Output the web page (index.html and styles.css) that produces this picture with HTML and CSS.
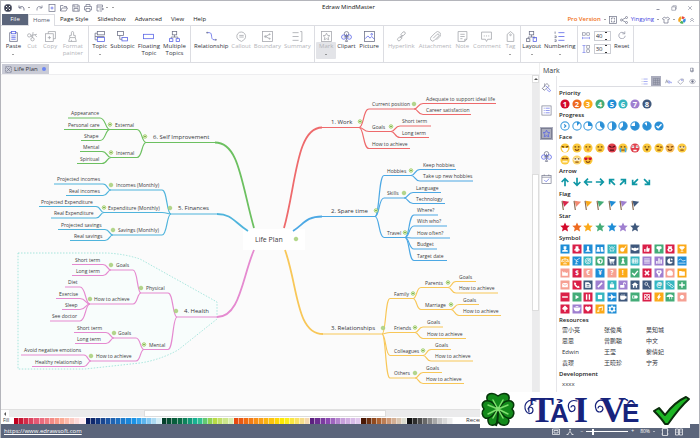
FILE: index.html
```html
<!DOCTYPE html>
<html lang="en">
<head>
<meta charset="utf-8">
<title>Edraw MindMaster</title>
<link rel="stylesheet" href="styles.css">
</head>
<body>
<svg class="defs" aria-hidden="true">
  <symbol id="logo" viewBox="0 0 16 16"><circle cx="8" cy="8" r="7.5" fill="#3b3f4d"/><path d="M4 4l8 8M12 4l-8 8" stroke="#fff" stroke-width="2"/><circle cx="8" cy="8" r="2" fill="#3b3f4d"/></symbol>
  <symbol id="undo" viewBox="0 0 16 16"><path d="M2 3v5h5M2.500 8C6 3 13 4 12 13" stroke-width="1.800"/></symbol>
  <symbol id="redo" viewBox="0 0 16 16"><path d="M14 3v5H9M13.500 8C10 3 3 4 4 13"/></symbol>
  <symbol id="new" viewBox="0 0 16 16"><rect x="2" y="1" width="12" height="14"/><path class="b" d="M8 5v6M5 8h6"/></symbol>
  <symbol id="open" viewBox="0 0 16 16"><path d="M1 14V3h5l2 2h5v3M1 14L4 8h11l-3 6z"/></symbol>
  <symbol id="save" viewBox="0 0 16 16"><path d="M1.500 1.500h11l2 2v11h-13zM4 2v4h8V2M4 14V9h8v5"/></symbol>
  <symbol id="print" viewBox="0 0 16 16"><path d="M4 5V1h8v4M4 12H1V5h14v7h-3M4 9h8v6H4z"/></symbol>
  <symbol id="export" viewBox="0 0 16 16"><path d="M13 6V2H2v12h4M2 6h11M7 10h8M12 8l3 2-3 2M7 14h5"/></symbol>
  <symbol id="paste" viewBox="0 0 20 20"><path d="M6 3H3v16h14V3h-3"/><rect class="b" x="6" y="1" width="8" height="4"/><path class="b" d="M6 9h8M6 12h8M6 15h8"/></symbol>
  <symbol id="cut" viewBox="0 0 20 20"><circle cx="4" cy="8" r="3"/><circle cx="10" cy="15" r="3"/><path d="M7 8l11-2M10 12L11 2M7 9l3 3M14 7l4 4"/></symbol>
  <symbol id="copy" viewBox="0 0 20 20"><path d="M6 5V1h13v13h-4"/><rect x="1" y="5" width="14" height="14"/><path d="M8 9v6M5 12h6"/></symbol>
  <symbol id="painter" viewBox="0 0 20 20"><path d="M8 8V3a2 2 0 0 1 4 0v5h3v4H5V8zM5 12l-2 7h14l-2-7M8 19v-3"/></symbol>
  <symbol id="topic" viewBox="0 0 20 20"><rect x="6" y="1" width="13" height="6"/><path d="M6 4H2v12h4"/><rect class="b" x="6" y="12" width="13" height="7"/><path d="M2 10h17"/></symbol>
  <symbol id="subtopic" viewBox="0 0 20 20"><rect x="1" y="1" width="11" height="7"/><path d="M5 8v7h4"/><rect class="b" x="9" y="12" width="10" height="6"/></symbol>
  <symbol id="floating" viewBox="0 0 20 20"><rect class="b" x="1" y="6" width="18" height="8"/></symbol>
  <symbol id="multiple" viewBox="0 0 20 20"><rect x="6" y="1" width="8" height="6"/><path d="M10 7v4M4 14v-3h12v3"/><rect class="b" x="1" y="14" width="6" height="5"/><rect class="b" x="13" y="14" width="6" height="5"/></symbol>
  <symbol id="relation" viewBox="0 0 20 20"><path class="b" d="M2 3h4c7 0 1 13 9 13h3"/><circle cx="2" cy="3" r="1"/><circle cx="18" cy="16" r="1"/></symbol>
  <symbol id="callout" viewBox="0 0 20 20"><path d="M6 17a8 8 0 1 1 7 0l-3 2zM6 8h8M6 11h8"/></symbol>
  <symbol id="boundary" viewBox="0 0 20 20"><rect x="1" y="1" width="18" height="18"/><path d="M14 6L6 10l8 4"/><circle cx="6" cy="10" r="1.500"/><circle cx="14" cy="6" r="1"/><circle cx="14" cy="14" r="1"/></symbol>
  <symbol id="summary" viewBox="0 0 20 20"><path d="M1 3h11M1 10h11M1 17h11M15 1h3v18h-3"/></symbol>
  <symbol id="mark" viewBox="0 0 20 20"><rect x="1" y="1" width="18" height="18"/><path class="b" d="M10 4l2 4 4 .5-3 3 1 4.500-4-2-4 2 1-4.500-3-3 4-.5z"/></symbol>
  <symbol id="clipart" viewBox="0 0 20 20"><circle cx="10" cy="5" r="4"/><circle class="b" cx="5" cy="11" r="4"/><circle class="b" cx="15" cy="11" r="4"/><path d="M10 5v10l-2 4h4l-2-4M5 11l5-1 5 1"/></symbol>
  <symbol id="picture" viewBox="0 0 20 20"><rect x="1" y="1" width="18" height="18"/><path class="b" d="M2 14l5-5 4 4 3-3 5 5"/><circle class="b" cx="14" cy="6" r="1.500"/></symbol>
  <symbol id="link" viewBox="0 0 20 20"><rect x="9" y="3" width="9" height="5" rx="2.500" transform="rotate(-45 13 6)"/><rect x="2" y="12" width="9" height="5" rx="2.500" transform="rotate(-45 6 14)"/><path d="M7 13l6-6"/></symbol>
  <symbol id="attach" viewBox="0 0 20 20"><path d="M6 13l7-7a2 2 0 0 1 3 3l-8 8a4 4 0 0 1-6-6l8-8a5 5 0 0 1 8 7l-6 6"/></symbol>
  <symbol id="note" viewBox="0 0 20 20"><path d="M2 1h16v14l-4 4H2zM6 6h8M6 10h8M6 14h4M14 19v-4h4"/></symbol>
  <symbol id="comment" viewBox="0 0 20 20"><path d="M1 2h18v13h-7l-2 4-2-4H1zM5 9h2M9 9h2M13 9h2"/></symbol>
  <symbol id="tag" viewBox="0 0 20 20"><path d="M4 6l6-5 6 5v13H4z"/><circle cx="10" cy="7" r="1.500"/></symbol>
  <symbol id="layout" viewBox="0 0 20 20"><rect x="6" y="1" width="8" height="6"/><path d="M10 7v4M4 14v-3h12v3"/><rect x="1" y="14" width="6" height="5"/><rect class="b" x="13" y="12" width="6" height="7"/></symbol>
  <symbol id="numbering" viewBox="0 0 20 20"><path d="M2 1v4M1 9h3v3H1M1 16h3v3H1"/><path class="b" d="M8 3h11M8 10h11M8 17h11"/></symbol>
  <symbol id="hgap" viewBox="0 0 20 20"><rect x="1" y="2" width="7" height="6"/><rect x="12" y="2" width="7" height="6"/><path class="b" d="M1 12v6M19 12v6M1 15h18"/></symbol>
  <symbol id="vgap" viewBox="0 0 20 20"><rect x="12" y="1" width="7" height="7"/><rect x="12" y="12" width="7" height="7"/><path class="b" d="M1 1h8M1 19h8M5 1v18"/></symbol>
  <symbol id="reset" viewBox="0 0 20 20"><path d="M16 6a8 8 0 1 0 2 6M17 1v6h-6"/></symbol>
  <symbol id="frame" viewBox="0 0 16 16"><rect x="1" y="1" width="14" height="14"/><path d="M5 7V4h3M11 9v3H8M11 7V4H9M5 9v3h2"/></symbol>
  <symbol id="share" viewBox="0 0 16 16"><circle cx="3" cy="8" r="2"/><circle cx="13" cy="3" r="2"/><circle cx="13" cy="13" r="2"/><path d="M5 7l6-3M5 9l6 3"/></symbol>
  <symbol id="shirt" viewBox="0 0 16 16"><path d="M5 2L1 5l2 3 1-1v7h8V7l1 1 2-3-4-3c-1 3-5 3-6 0z"/></symbol>
  <symbol id="wheel" viewBox="0 0 16 16"><g fill="none" stroke-width="5"><path stroke="#e8483f" d="M8 3a5 5 0 0 1 4 2"/><path stroke="#3c8de0" d="M12.500 6a5 5 0 0 1-2 6"/><path stroke="#4db35c" d="M10 12.500a5 5 0 0 1-5-1"/><path stroke="#f5a623" d="M4 11a5 5 0 0 1 3-8"/></g></symbol>
  <symbol id="up" viewBox="0 0 16 16"><path d="M3 8l5-5 5 5M3 13l5-5 5 5"/></symbol>
  <symbol id="min" viewBox="0 0 16 16"><path d="M4 12h8" stroke-width="2"/></symbol>
  <symbol id="max" viewBox="0 0 16 16"><path d="M2 5h10v9H2zM5 5V2h9v9h-2"/></symbol>
  <symbol id="close" viewBox="0 0 16 16"><path d="M3 3l10 10M13 3L3 13"/></symbol>
  <symbol id="doc" viewBox="0 0 16 16"><rect x="1" y="1" width="14" height="14" rx="2" stroke-dasharray="3 1"/><path d="M3 3l10 10M13 3L3 13"/></symbol>
  <symbol id="pin" viewBox="0 0 16 16"><path d="M4 3h7v8H4zM3 11h10M8 11v4M10 3v8"/></symbol>
  <symbol id="list" viewBox="0 0 20 20"><path d="M2 3h2M2 10h2M2 17h2"/><path class="b" d="M7 3h12M7 10h12M7 17h12"/></symbol>
  <symbol id="grid" viewBox="0 0 20 20"><path d="M1 1h18v18H1zM7 1v18M13 1v18M1 7h18M1 13h18" stroke="#7b7f92"/></symbol>
  <symbol id="sort" viewBox="0 0 20 20"><path d="M1 15L5 5l4 10M3 11h5"/><path class="b" d="M11 15V6M11 11c7-3 7 5 0 3M19 15v-4"/></symbol>
  <symbol id="ptag" viewBox="0 0 20 20"><path d="M2 11l9-8h7v7l-8 8z"/><circle class="b" cx="14" cy="6" r="1.500"/></symbol>
  <symbol id="eye" viewBox="0 0 20 20"><path d="M1 10c4-8 14-8 18 0-4 8-14 8-18 0z"/><circle cx="10" cy="10" r="3" fill="#6d7187"/></symbol>
  <symbol id="brush" viewBox="0 0 24 24"><path d="M3 14L13 3l5 6-11 9zM7 18l-4-4"/><path class="b" d="M11 9l5 4 5 6-3 2-6-5"/><path d="M8 3v8"/></symbol>
  <symbol id="outline" viewBox="0 0 24 24"><rect x="2" y="2" width="20" height="20"/><path class="b" d="M6 7h2M10 7h9M6 12h2M10 12h9M6 17h2M10 17h9"/></symbol>
  <symbol id="calendar" viewBox="0 0 24 24"><rect x="2" y="3" width="20" height="18"/><path d="M2 7h20M7 1v3M17 1v3"/><path class="b" d="M7 13l4 4 7-7"/></symbol>
  <symbol id="screen" viewBox="0 0 16 16"><path d="M1 2h14v11H1zM4 5h8v5H4z"/></symbol>
  <symbol id="fit" viewBox="0 0 16 16"><path d="M8 3v4M8 7l-5 6M8 7l5 6M1 13h4M11 13h4M6 3h4"/></symbol>
  <symbol id="page" viewBox="0 0 16 16"><path d="M3 1h10v14H3zM1 4h2M13 4h2M1 12h2M13 12h2"/></symbol>
  <symbol id="book" viewBox="0 0 16 16"><path d="M1 2h6v12H1zM9 2h6v12H9zM3 6h2M11 6h2M3 9h2M11 9h2"/></symbol>
</svg>

<header class="titlebar">
  <nav class="quick" aria-label="Quick access">
    <svg class="i"><use href="#logo"/></svg>
    <button class="drop" aria-label="Undo"><svg class="i"><use href="#undo"/></svg></button>
    <button aria-label="Redo"><svg class="i"><use href="#redo"/></svg></button>
    <button aria-label="New"><svg class="i"><use href="#new"/></svg></button>
    <button aria-label="Open"><svg class="i"><use href="#open"/></svg></button>
    <button aria-label="Save"><svg class="i"><use href="#save"/></svg></button>
    <button aria-label="Print"><svg class="i"><use href="#print"/></svg></button>
    <button class="drop" aria-label="Export"><svg class="i"><use href="#export"/></svg></button>
    <button class="drop" aria-label="Customize"></button>
  </nav>
  <h1>Edraw MindMaster</h1>
  <div class="window-buttons">
    <button aria-label="Minimize"><svg class="i s"><use href="#min"/></svg></button>
    <button aria-label="Restore"><svg class="i s"><use href="#max"/></svg></button>
    <button aria-label="Close"><svg class="i s"><use href="#close"/></svg></button>
  </div>
</header>

<nav class="menubar">
  <button class="file">File</button>
  <button class="home">Home</button>
  <button>Page Style</button>
  <button>Slideshow</button>
  <button>Advanced</button>
  <button>View</button>
  <button>Help</button>
  <div class="account">
    <button class="pro drop">Pro Version</button>
    <button aria-label="Full screen"><svg class="i"><use href="#frame"/></svg></button>
    <button aria-label="Share"><svg class="i"><use href="#share"/></svg></button>
    <button class="user drop">Yingying</button>
    <button class="drop" aria-label="Theme"><svg class="i"><use href="#shirt"/></svg></button>
    <button aria-label="Apps"><svg class="i"><use href="#wheel"/></svg></button>
    <button aria-label="Collapse ribbon"><svg class="i s"><use href="#up"/></svg></button>
  </div>
</nav>

<div class="ribbon">
  <div class="group g-clip">
    <button class="tool more"><svg><use href="#paste"/></svg>Paste</button>
    <button class="tool" disabled><svg><use href="#cut"/></svg>Cut</button>
    <button class="tool" disabled><svg><use href="#copy"/></svg>Copy</button>
    <button class="tool" disabled><svg><use href="#painter"/></svg>Format<br>painter</button>
  </div>
  <div class="group g-topic">
    <button class="tool more"><svg><use href="#topic"/></svg>Topic</button>
    <button class="tool"><svg><use href="#subtopic"/></svg>Subtopic</button>
    <button class="tool"><svg><use href="#floating"/></svg>Floating<br>Topic</button>
    <button class="tool"><svg><use href="#multiple"/></svg>Multiple<br>Topics</button>
  </div>
  <div class="group g-rel">
    <button class="tool"><svg><use href="#relation"/></svg>Relationship</button>
    <button class="tool" disabled><svg><use href="#callout"/></svg>Callout</button>
    <button class="tool" disabled><svg><use href="#boundary"/></svg>Boundary</button>
    <button class="tool" disabled><svg><use href="#summary"/></svg>Summary</button>
  </div>
  <div class="group g-mark">
    <button class="tool more active" disabled><svg><use href="#mark"/></svg><span>Mark</span></button>
    <button class="tool"><svg><use href="#clipart"/></svg>Clipart</button>
    <button class="tool"><svg><use href="#picture"/></svg>Picture</button>
  </div>
  <div class="group g-link">
    <button class="tool" disabled><svg><use href="#link"/></svg>Hyperlink</button>
    <button class="tool" disabled><svg><use href="#attach"/></svg>Attachment</button>
    <button class="tool" disabled><svg><use href="#note"/></svg>Note</button>
    <button class="tool" disabled><svg><use href="#comment"/></svg>Comment</button>
    <button class="tool more" disabled><svg><use href="#tag"/></svg>Tag</button>
  </div>
  <div class="group g-layout">
    <button class="tool more"><svg><use href="#layout"/></svg>Layout</button>
    <button class="tool more"><svg><use href="#numbering"/></svg>Numbering</button>
  </div>
  <div class="group g-space">
    <div class="spins">
      <label><svg class="i"><use href="#hgap"/></svg><span class="spin"><input type="text" value="40" aria-label="Horizontal spacing"></span></label>
      <label><svg class="i"><use href="#vgap"/></svg><span class="spin"><input type="text" value="30" aria-label="Vertical spacing"></span></label>
    </div>
    <button class="tool reset"><svg><use href="#reset"/></svg>Reset</button>
  </div>
  <div class="group g-rest"></div>
</div>

<main class="work">
  <section class="editor">
    <div class="tabs"><button class="doc-tab"><svg class="i"><use href="#doc"/></svg>Life Plan<i></i></button></div>
    <div class="stage">
      <svg class="map" id="map" viewBox="1 75 531 334" role="img" aria-label="Life Plan mind map"></svg>
      <div class="vbar"><button aria-label="Scroll up"></button><span></span></div>
    </div>
    <div class="hbar"><button aria-label="Scroll left"></button><span></span></div>
    <div class="fill"><span>Fill</span><div class="swatches" id="swatches"></div><span class="recent">Recent</span></div>
  </section>

  <aside class="panel">
    <header><h2>Mark</h2><button aria-label="Pin"><svg class="i s"><use href="#pin"/></svg></button></header>
    <div class="panel-body">
      <nav class="rail">
        <button aria-label="Format"><svg><use href="#brush"/></svg></button>
        <button aria-label="Outline"><svg><use href="#outline"/></svg></button>
        <button class="on" aria-label="Mark"><svg><use href="#mark"/></svg></button>
        <button aria-label="Clipart"><svg><use href="#clipart"/></svg></button>
        <button aria-label="Task"><svg><use href="#calendar"/></svg></button>
      </nav>
      <div class="marks">
        <div class="views">
          <button aria-label="List"><svg class="i"><use href="#list"/></svg></button>
          <button class="on" aria-label="Grid"><svg class="i"><use href="#grid"/></svg></button>
          <button aria-label="Rename"><svg class="i"><use href="#sort"/></svg></button>
          <button aria-label="Tags"><svg class="i"><use href="#ptag"/></svg></button>
          <button aria-label="Show"><svg class="i"><use href="#eye"/></svg></button>
        </div>
        <div class="sections">
          <section><h3>Priority</h3><div class="icons" id="priority"></div></section>
          <section><h3>Progress</h3><div class="icons" id="progress"></div></section>
          <section><h3>Face</h3><div class="icons" id="face"></div></section>
          <section><h3>Arrow</h3><div class="icons" id="arrow"></div></section>
          <section><h3>Flag</h3><div class="icons" id="flag"></div></section>
          <section><h3>Star</h3><div class="icons" id="star"></div></section>
          <section><h3>Symbol</h3><div class="icons" id="symbol"></div></section>
          <section><h3>Resources</h3>
            <ul class="names"><li>雷小亮</li><li>张俊禹</li><li>吴知城</li><li>思思</li><li>曾鹏聪</li><li>中文</li><li>Edwin</li><li>王莹</li><li>黎倩妃</li><li>袁璟</li><li>王晓珍</li><li>宁芳</li></ul>
          </section>
          <section><h3>Development</h3><ul class="names"><li>xxxx</li></ul></section>
        </div>
      </div>
    </div>
  </aside>
</main>

<footer class="status">
  <a href="https://www.edrawsoft.com">https://www.edrawsoft.com</a>
  <div class="zoom">
    <svg class="i"><use href="#screen"/></svg>
    <svg class="i"><use href="#fit"/></svg>
    <button aria-label="Zoom out">−</button>
    <input type="range" min="0" max="100" value="14" aria-label="Zoom">
    <button aria-label="Zoom in">+</button>
    <span class="drop">80%</span>
    <svg class="i"><use href="#page"/></svg>
    <svg class="i"><use href="#book"/></svg>
  </div>
</footer>

<div class="badge">
  <svg viewBox="480 392 210 36">
    <g fill="#138a1b" stroke="#06360a" stroke-width="1.500" stroke-linejoin="round">
      <path d="M498 409C491 406 487 403 487 399C486 394 492 391 498 396C504 391 510 394 509 399C509 403 505 406 498 409Z"/>
      <path d="M498 410C491 413 487 417 488 421C489 427 495 426 498 422C501 426 508 427 509 421C509 417 505 413 498 410Z"/>
      <path d="M497 409C494 402 489 400 485 401C481 403 482 407 484 409C481 412 482 416 485 418C489 419 494 416 497 409Z"/>
      <path d="M499 409C502 402 507 400 511 401C515 403 514 407 512 409C515 412 514 416 511 418C507 419 502 416 499 409Z"/>
      <path d="M498 410c0 6 0 11-2 16" fill="none" stroke-width="2"/>
    </g>
    <path d="M498 409l-5-9M498 409l5-9M498 409l-10-4M498 409l10-4M498 409l-10 5M498 409l10 5M498 409l-5 9M498 409l5 9" stroke="#7ede6e" stroke-width="1.500" fill="none" stroke-linecap="round"/>
    <g class="fancy"><text x="530" y="422">T</text><text x="574" y="422">I</text><text x="600" y="422">V</text></g>
    <g class="heavy"><text x="550" y="422">Ả</text><text x="622" y="422">Ề</text></g>
    <g fill="none" stroke="#17237c" stroke-width="1.200" stroke-linecap="round">
      <path d="M536 401c-9-3-13 4-10 10 2 4 7 3 7-1 0-3-4-4-5-1M533 404c-4 1-5 4-4 8"/>
      <path d="M577 401c-7-2-10 3-8 8 1 4 6 3 6-1 0-3-3-3-4-1"/>
      <path d="M604 401c-6-3-10 3-8 8 1 4 6 4 7 0 0-3-4-4-5-1"/>
    </g>
    <path d="M654 411l5-3 6 7c6-8 12-14 21-18l3 2c-8 7-14 15-21 25h-3c-3-5-7-9-11-13z" fill="#1db524" stroke="#0b2d0c" stroke-width="2" stroke-linejoin="round"/>
  </svg>
</div>
<script src="app.js"></script>
</body>
</html>
```
FILE: styles.css
```css
:root {
  --line: #dcdde2;
  --ink: #33343c;
  --gray: #6d7187;
  --accent: #5560e6;
  --slate: #5b657b;
}
* { box-sizing: border-box; }
body {
  margin: 0;
  min-height: 100vh;
  display: flex;
  flex-direction: column;
  border: 1px solid #b4b5bb;
  border-bottom: 0;
  background: #fff;
  color: var(--ink);
  font: 6px/7px "Open Sans", "Noto Sans CJK SC", sans-serif;
}
button, input { font: inherit; color: inherit; border: 0; padding: 0; margin: 0; background: none; }
h1, h2, h3, ul { margin: 0; padding: 0; font-size: inherit; font-weight: 400; list-style: none; }
svg { fill: none; stroke: var(--gray); stroke-width: 1.400; display: block; }
.b { stroke: var(--accent); }
.defs { position: absolute; width: 0; height: 0; }
.i { width: 8px; height: 8px; flex: none; }
.i.s { width: 6px; height: 6px; }
.drop { display: inline-flex; align-items: center; gap: 3px; }
.drop::after, .more::after {
  content: "";
  border: 1px solid transparent;
  border-top-color: #444;
  border-bottom: 0;
}

.titlebar { display: grid; grid-template-columns: 1fr auto 1fr; align-items: center; height: 13px; padding: 0 6px 0 3px; }
.titlebar h1 { color: #111; }
.quick { display: flex; align-items: center; gap: 4px; }
.quick > :nth-child(2) { margin-left: 2px; }
.quick > :nth-child(n+3):nth-child(-n+4) { margin-left: 1px; }
.quick .drop { gap: 2px; }
.window-buttons { display: flex; justify-content: flex-end; gap: 10px; }

.menubar { display: flex; height: 12px; padding-left: 1px; color: #222; border-bottom: 1px solid var(--line); }
.menubar > button { margin-right: 9px; }
.menubar > .file { width: 26px; margin: 0; background: var(--slate); color: #fff; }
.menubar > .home { width: 27px; margin: 0 5px 0 0; height: 12px; background: #fff; color: #555a72; border: 1px solid var(--line); border-bottom: 0; }
.account { display: flex; align-items: center; gap: 3px; margin-left: auto; padding-right: 4px; }
.pro { color: #f07020; font-weight: 600; }
.user { color: #3f45e0; }

.ribbon { display: flex; height: 37px; border-bottom: 1px solid var(--line); }
.group { display: flex; justify-content: space-around; border-right: 1px solid var(--line); min-width: 0; padding: 5px 2px 0; }
.g-clip { flex: 87 1 0; }
.g-topic { flex: 102 1 0; }
.g-rel { flex: 126 1 0; }
.g-mark { flex: 67 1 0; }
.g-link { flex: 139 1 0; }
.g-layout { flex: 59 1 0; padding-left: 0; padding-right: 0; }
.g-space { flex: 54 1 0; }
.g-rest { flex: 64 1 0; border: 0; }
.tool { display: flex; flex-direction: column; align-items: center; white-space: nowrap; text-align: center; }
.tool svg { width: 11px; height: 11px; margin-bottom: 1px; }
.tool::after { margin-top: 4px; }
.tool:disabled { --gray: #a3a5ab; --accent: #a3a5ab; color: #b3b4b9; }
.tool.active { position: relative; }
.tool.active::before { content: ""; position: absolute; inset: 11px -3px 3px; background: #e3e4e8; border-radius: 1px; }
.tool.active span, .tool.active::after { position: relative; }
.spins { display: flex; flex-direction: column; gap: 3px; }
.spins label { display: flex; align-items: center; gap: 4px; }
.spin { display: flex; align-items: center; width: 17px; height: 10px; border: 1px solid #ccced4; }
.spin input { width: 10px; min-width: 0; height: 8px; padding-left: 1px; }
.spin::after { content: ""; width: 2px; height: 6px; border-top: 1px solid #333; border-bottom: 1px solid #333; }
.reset svg { width: 8px; height: 8px; margin-bottom: 4px; }

.work { flex: 1; display: flex; min-height: 0; }
.editor { flex: 1; display: flex; flex-direction: column; min-width: 0; }
.tabs { height: 12px; padding: 1px 1px 0; border-bottom: 1px solid #eeeef0; }
.doc-tab { display: flex; align-items: center; gap: 2px; height: 10px; width: 47px; padding: 0 3px; background: #c9cbd6; white-space: nowrap; }
.doc-tab i { width: 4px; height: 4px; margin-left: auto; border-radius: 50%; background: #6c86f2; }
.doc-tab .i { width: 7px; height: 7px; }
.stage { flex: 1; display: flex; min-height: 0; background: #fbfbfb; }
.map { flex: 1; min-width: 0; width: 100%; height: 100%; }
.map text { stroke: none; fill: #3c3c40; font-size: 5px; }
.map .branch { font-size: 6px; fill: #33343a; }
.map .root { font-size: 7px; }
.vbar { width: 7px; flex: none; background: #ebebec; display: flex; flex-direction: column; }
.vbar button { height: 8px; background: #fff; border: 1px solid #ddd; display: grid; place-items: center; }
.vbar button::before { content: ""; border: 2px solid transparent; border-bottom-color: #555; border-top: 0; }
.vbar span { margin-top: 91px; flex: 0 0 41%; background: #fff; border: 1px solid #ddd; }
.hbar { height: 8px; display: flex; background: #ebebec; border-top: 1px solid #e0e0e0; }
.hbar button { width: 8px; background: #fff; display: grid; place-items: center; }
.hbar button::before { content: ""; border: 2px solid transparent; border-right-color: #555; border-left: 0; }
.hbar span { margin-left: 25%; width: 45%; background: #fff; border: 1px solid #ddd; }
.fill { display: flex; align-items: center; height: 7px; font-size: 5px; }
.fill > span { width: 13px; padding-left: 2px; }
.fill > .recent { width: 80px; padding-left: 7px; font-size: 6px; }
.swatches { flex: 1; display: flex; height: 6px; }
.swatches i { flex: 1; border-right: 1px solid #ffffff80; }

.panel { width: 160px; display: flex; flex-direction: column; border-left: 1px solid #eee; }
.panel header { display: flex; align-items: center; justify-content: space-between; height: 13px; padding: 1px 4px 0 3px; }
.panel h2 { font-size: 7px; }
.panel-body { flex: 1; display: flex; }
.rail { width: 16px; padding-top: 5px; display: flex; flex-direction: column; gap: 10px; }
.rail button { width: 13px; height: 13px; display: grid; place-items: center; }
.rail svg { width: 11px; height: 11px; }
.on { background: #abadbd; }
.marks { flex: 1; display: flex; flex-direction: column; border-left: 1px solid #e6e6ea; }
.views { display: flex; justify-content: flex-end; gap: 2px; height: 11px; padding-right: 2px; border-bottom: 1px solid #dcdde2; margin-left: 2px; }
.views button { width: 10px; height: 10px; display: grid; place-items: center; }
.views .i { width: 7px; height: 7px; }
.sections { flex: 1; display: flex; flex-direction: column; justify-content: space-between; padding: 1px 11px 34px 2px; }
.sections h3 { line-height: 10px; font-weight: 600; color: #222; }
.icons { display: grid; grid-template-columns: repeat(11, 1fr); }
.icons svg { width: 10px; height: 12px; padding: 1px 0; justify-self: center; stroke: none; }
.icons text { font: 700 9px "Open Sans", sans-serif; fill: #fff; text-anchor: middle; }
.names { display: grid; grid-template-columns: repeat(3, 1fr); padding-left: 3px; }
.names li { line-height: 11px; font-size: 6px; }

.status { display: flex; align-items: center; justify-content: space-between; height: 15px; padding: 0 3px; background: var(--slate); color: #fff; }
.status a { color: #fff; }
.zoom { display: flex; align-items: center; gap: 6px; padding-right: 13px; font-size: 5px; }
.zoom svg { stroke: #fff; }
.zoom .drop::after { border-top-color: #fff; }
.zoom input { appearance: none; width: 42px; height: 6px; margin: 0 -3px; background: linear-gradient(#fff, #fff) center / 100% 1px no-repeat; }
.zoom input::-webkit-slider-thumb { appearance: none; width: 2px; height: 6px; background: #fff; }

.badge { position: absolute; right: 10px; bottom: 10px; width: 210px; background: #fff; }
.badge svg { stroke: none; width: 100%; overflow: visible; }
.fancy text { font: 700 36px "Liberation Serif", serif; fill: #17237c; }
.heavy text { font: 700 26px "Liberation Sans", sans-serif; fill: #17237c; }
```
FILE: app.js
```js
const byId = (id) => document.getElementById(id);

// Node: [label, label x, underline y, end near the parent, far end, children]
const leaf = (t, x, y, near, far) => [t, x, y, near, far, []];
const branches = [
  { color: '#6cc060', root: 'M215 142.5C239 142.5 241 182 254 228', node:
    ['6. Self Improvement', 153, 142.5, 215, 146, [
      ['External', 115, 129.5, 137, 110, [leaf('Appearance', 71, 118, 100, 68), leaf('Personal care', 68, 129.5, 100, 64), leaf('Shape', 84, 140.5, 100, 81)]],
      ['Internal', 116, 157.5, 137, 111, [leaf('Mental', 83, 151.5, 102, 80), leaf('Spiritual', 80, 163.5, 102, 77)]]]] },
  { color: '#4fb4dc', root: 'M217 214C232 214 234 222 248 231', node:
    ['5. Finances', 178, 214, 217, 171, [
      ['Incomes (Monthly)', 116, 190, 162, 111, [leaf('Projected incomes', 57, 184, 103, 54), leaf('Real incomes', 69, 195.5, 103, 66)]],
      ['Expenditure (Monthly)', 108, 212.5, 162, 104, [leaf('Projected Expenditure', 41, 206.5, 96, 39), leaf('Real Expenditure', 54, 218, 96, 51)]],
      ['Savings (Monthly)', 118, 235, 162, 113, [leaf('Projected savings', 61, 229.5, 105, 58), leaf('Real savings', 74, 240.5, 105, 70)]]]] },
  { color: '#e58ad0', root: 'M217 317C240 317 242 278 254 250', node:
    ['4. Health', 184, 317, 217, 177, [
      ['Physical', 146, 293, 168, 141, [
        ['Goals', 116, 270, 133, 111, [leaf('Short term', 75, 264.5, 103, 72), leaf('Long term', 76, 275.5, 103, 72)]],
        ['How to achieve', 94, 304, 133, 90, [leaf('Diet', 68, 287, 80, 65), leaf('Exercise', 59, 298.5, 80, 56), leaf('Sleep', 65, 309.5, 80, 62), leaf('See doctor', 52, 321, 80, 50)]]]],
      ['Mental', 149, 349.5, 168, 144, [
        ['Goals', 118, 338, 136, 114, [leaf('Short term', 77, 332.5, 106, 74), leaf('Long term', 77, 343.5, 106, 75)]],
        ['How to achieve', 96, 361, 136, 91, [leaf('Avoid negative emotions', 24, 355, 84, 21), leaf('Healthy relationship', 35, 366.5, 84, 32)]]]]]] },
  { color: '#ee6a6c', root: 'M322 127.5C296 127.5 296 186 284 228', node:
    ['1. Work', 331, 127.5, 322, 359, [
      ['Current position', 372, 109, 369, 414, [leaf('Adequate to support ideal life', 426, 103.5, 423, 496), leaf('Career satisfaction', 426, 114.5, 423, 471)]],
      ['Goals', 372, 131.5, 369, 391, [leaf('Short term', 402, 126, 400, 431), leaf('Long term', 402, 137.5, 400, 429)]],
      leaf('How to achieve', 372, 148.5, 369, 410)]] },
  { color: '#4ca8e4', root: 'M322 216.500C306 216.500 304 224 293 231', node:
    ['2. Spare time', 331, 216.5, 322, 375, [
      ['Hobbies', 387, 175.5, 384, 411, [leaf('Keep hobbies', 423, 169.5, 420, 456), leaf('Take up new hobbies', 423, 181, 420, 473)]],
      ['Skills', 387, 198, 384, 404, [leaf('Language', 416, 192.5, 413, 441), leaf('Technology', 416, 203.5, 413, 445)]],
      ['Travel', 387, 237.5, 384, 405, [leaf('Where?', 417, 215, 414, 438), leaf('With who?', 417, 226, 414, 447), leaf('How often?', 417, 238, 414, 450), leaf('Budget', 417, 249, 414, 437), leaf('Target date', 417, 260.5, 414, 447)]]]] },
  { color: '#f8c758', root: 'M323 334C296 334 298 286 285 250', node:
    ['3. Relationships', 331, 334, 323, 382, [
      ['Family', 394, 298.5, 390, 413, [
        ['Parents', 425, 287.5, 421, 448, [leaf('Goals', 459, 281.5, 456, 476), leaf('How to achieve', 459, 293, 456, 498)]],
        ['Marriage', 425, 309.5, 421, 451, [leaf('Goals', 463, 304.5, 459, 479), leaf('How to achieve', 463, 315.5, 459, 501)]]]],
      ['Friends', 394, 332.5, 390, 415, [leaf('Goals', 427, 327, 423, 443), leaf('How to achieve', 427, 338.5, 423, 466)]],
      ['Colleagues', 394, 355.5, 390, 423, [leaf('Goals', 435, 349.5, 431, 451), leaf('How to achieve', 435, 361, 431, 473)]],
      ['Others', 394, 378, 390, 415, [leaf('Goals', 426, 372.5, 423, 442), leaf('How to achieve', 426, 383.5, 423, 464)]]]] }
];

const marker = (x, y) => `<circle cx="${x}" cy="${y}" r="1.800" fill="#e2f3c6" stroke="#9ccb68" stroke-width=".8"/><path d="M${x - 1} ${y}h2" stroke="#6f9f3f" stroke-width=".8"/>`;

function drawNode([label, x, y, near, far, kids], joint) {
  let out = `<path d="M${far} ${y}H${near}`;
  if (joint) {
    const d = joint[0] - near;
    out += `C${near + d * 0.6} ${y} ${near + d * 0.5} ${joint[1]} ${joint[0]} ${joint[1]}`;
  }
  out += '"/>' + kids.map((k) => drawNode(k, [far, y])).join('');
  if (kids.length) out += marker(far + (joint ? 0 : Math.sign(far - near)), y - (joint ? 5 : 6));
  return out + `<text x="${x}" y="${y - (joint ? 3 : 4)}"${joint ? '' : ' class="branch"'}>${label}</text>`;
}

byId('map').innerHTML =
  '<path d="M18 253H107Q125 254 140 259L217 302V319L178 350Q160 360 140 363L85 369H18Z" fill="#f8fdfc" stroke="#93dfd5" stroke-width=".8" stroke-dasharray="1.500 1.500"/>' +
  '<rect x="243" y="229" width="62" height="21" fill="#fff" stroke="none"/>' +
  branches.map((b) => `<g stroke="${b.color}" stroke-width="1.200"><path d="${b.root}" stroke-width="1.800"/>${drawNode(b.node)}</g>`).join('') +
  marker(296, 239) + '<text class="root" x="255" y="242">Life Plan</text>';

// Fill colours: each ramp runs through its stops in the given number of steps.
const ramps = [
  [14, 'c00020', 'e8627c', 'fba48c', 'fdeaf0'], [15, '0a1a5c', '1f5fae', '1a96ea', 'd4ecf4'],
  [14, '06402c', '0b7048', '1bbca0', 'b4d83c', 'd8ecb0'], [15, 'e84a10', 'fa9a18', 'fff000', 'f4d8b0'],
  [10, '5c2080', '8a48b0', 'c8a0dc', 'e0c8ec'], [9, '4a1804', 'a85a28', 'd0a080', 'dcdcd0'],
  [10, '101010', '686868', 'c8c8c8', 'ffffff']
];
const hex = (c, i) => parseInt(c.slice(i * 2, i * 2 + 2), 16);
byId('swatches').innerHTML = ramps.map(([n, ...s]) => Array.from({ length: n }, (_, i) => {
  const p = i / (n - 1) * (s.length - 1), k = Math.min(Math.floor(p), s.length - 2);
  const rgb = [0, 1, 2].map((c) => Math.round(hex(s[k], c) + (hex(s[k + 1], c) - hex(s[k], c)) * (p - k)));
  return `<i style="background:rgb(${rgb})"></i>`;
}).join('')).join('');

const icon = (body) => `<svg viewBox="0 0 12 12">${body}</svg>`;
const C = { r: '#da1f48', o: '#ee6a1f', y: '#fba919', g: '#44ac78', b: '#1f8dd6', t: '#35b6c0', p: '#9f7fd0', n: '#3f587c', s: '#f6a093' };

byId('priority').innerHTML = ['#d3092b', C.o, C.y, C.g, C.b, C.t, C.p, C.n]
  .map((c, i) => icon(`<circle cx="6" cy="6" r="5.500" fill="${c}"/><text x="6" y="9">${i + 1}</text>`)).join('');

const pie = (f) => {
  const a = f * 2 * Math.PI;
  return icon(`<circle cx="6" cy="6" r="5" fill="#fff" stroke="#4ba3df"/><path d="M6 6V1A5 5 0 ${f > 0.5 ? 1 : 0} 1 ${6 + 5 * Math.sin(a)} ${6 - 5 * Math.cos(a)}Z" fill="#2a8fd6"/>`);
};
byId('progress').innerHTML = icon('<circle cx="6" cy="6" r="5" fill="none" stroke="#4ba3df"/><path d="M5 4l2 2-2 2" fill="none" stroke="#2a8fd6"/>') +
  [0.12, 0.25, 0.38, 0.5, 0.62, 0.75, 0.88].map(pie).join('') +
  icon('<circle cx="6" cy="6" r="5.500" fill="#2a8fd6"/><path d="M3 6l2 2 4-4" fill="none" stroke="#fff" stroke-width="1.800"/>');

const dots = '<path d="M3 4.500h2M7 4.500h2" stroke="#6b4310" stroke-width="1.500"/>';
const smile = '<path d="M3.500 7.500Q6 10 8.500 7.500" fill="none" stroke="#8a4c10"/>';
const flat = '<path d="M4 8.500h4" stroke="#8a4c10"/>';
const faces = [
  ['#fbc93d', '<path d="M2 6h8q-1 5-4 5T2 6z" fill="#fff"/><path d="M2 4l3 1M10 4l-3 1" stroke="#6b4310"/>'],
  ['#fbc93d', dots + smile], ['#fbc93d', dots + '<circle cx="6" cy="8" r="1.500" fill="#e88c30"/>'], ['#fbc93d', dots + flat],
  ['#e0404c', '<path d="M2.500 3.500l3 2M9.500 3.500l-3 2M3.500 8.500h5" stroke="#501018" stroke-width="1.500"/>'],
  ['#fbc93d', dots + '<path d="M3 6v5M9 6v5" stroke="#4aaee8" stroke-width="2"/>' + flat],
  ['#e0404c', '<path d="M2 3h3v3H2zM7 3h3v3H7zM4 8h4v2H4z" fill="#fff"/><path d="M3 4.500h1M8 4.500h1" stroke="#333"/>'],
  ['#fbc93d', dots + '<path d="M4 7h4L6 10z" fill="#5b3418"/>'], ['#fbc93d', '<path d="M3 4h3M7 5h3" stroke="#8a4c10"/>' + flat],
  ['#fbc260', '<path d="M2 4l3 1M10 4l-3 1" stroke="#8a4c10"/>' + smile],
  ['#fbc93d', '<circle cx="4" cy="5" r="1.500" fill="#fff"/><circle cx="8" cy="5" r="1.500" fill="#fff"/>' + dots + flat],
  ['#fbc93d', '<path d="M2.500 5q1.500-2 3 0M6.500 5q1.500-2 3 0" fill="none" stroke="#8a4c10"/><path d="M3 7h6v2H3z" fill="#fff3d0"/>'],
  ['#fbd46a', '<circle cx="4" cy="5" r="2" fill="#fff"/><circle cx="8" cy="5" r="2" fill="#fff"/>' + dots + flat],
  ['#fbc93d', '<path d="M1.500 3h4v2l-2 1.500L1.500 5zM6.500 3h4v2l-2 1.500-2-1.500z" fill="#d3092b"/>' + smile]
];
byId('face').innerHTML = faces.map(([c, f]) => icon(`<circle cx="6" cy="6" r="5.500" fill="${c}"/>${f}`)).join('');

byId('arrow').innerHTML = [0, 180, -90, 90, -45, 45, -135, 135]
  .map((a) => icon(`<path d="M6 11V2M2 6l4-4 4 4" transform="rotate(${a} 6 6)" fill="none" stroke="#0f97a5" stroke-width="2"/>`)).join('');
byId('flag').innerHTML = ['#d8284c', '#f38a72', C.y, C.g, C.b, C.p, C.n]
  .map((c) => icon(`<path d="M3 1l8 1-6 6z" fill="${c}"/><path d="M2.500 1L4 12" stroke="#8a6a50"/>`)).join('');
byId('star').innerHTML = ['#d3092b', C.o, C.y, C.g, C.b, C.p, C.n]
  .map((c) => icon(`<path d="M6 .5l1.700 3.700 4 .4-3 2.700.9 4L6 9.300l-3.600 2 .9-4-3-2.700 4-.4z" fill="${c}"/>`)).join('');

// Symbol tiles: tile colour, then a filled (f), stroked (l or bold L) or text (t) glyph.
const tiles = [
  ['b', 'f', 'M4 2h4v4H7v1l3 1v2H2V8l3-1V6H4z'], ['r', 'f', 'M4 2h4v3l2 2v1H8v2H4V8H2V7l2-2z'], ['b', 'f', 'M4.500 2h3v4l-.5 1 3 3H2l3-3-.5-1z'],
  ['b', 'f', 'M2 3h3v3l1 2v2H1V8l1-2zM7 3h3v3l1 2v2H7z'], ['t', 'l', 'M3 6a3 3 0 1 0 6 0a3 3 0 1 0-6 0M6 4v2h1M2 3l1-1M10 3L9 2M3 10l1-1M9 10L8 9'],
  ['y', 'f', 'M2 7a3 3 0 1 1 6 0a3 3 0 1 1-6 0M7 5l2-2 1 1-2 2zM9 2l2-1-1 3z'], ['n', 'f', 'M1 4l3 1 2-1 2 1 3-1v3L8 8 6 9 4 8 1 7z'],
  ['r', 'f', 'M2 6h2v4H2zM5 6l1-4h1v3h3l-1 5H5z'], ['g', 'f', 'M3 2h6l1 3-3 2v3H5V7L2 5z'], ['r', 'f', 'M3 2h6v2H8l2 3-2 3H4L2 7l2-3H3zM5 6v2h2V6z'],
  ['y', 'f', 'M3 2h6l1 2-2 2-1.500 1v2H8v1H4V9h1.500V7L4 6 2 4z'],
  ['y', 'l', 'M6 2v8M3 10h6M2 4l4-1 4 1M1 7l1-3 2 3zM8 7l2-3 1 3z'], ['b', 'l', 'M2 3l3 2 5-3M5 5v5M5 6l3 1M3 10h4'],
  ['t', 'l', 'M2 6a4 4 0 1 0 8 0a4 4 0 1 0-8 0M4 6a2 2 0 1 0 4 0a2 2 0 1 0-4 0M6 6l4-4'], ['g', 'f', 'M2 6a4 4 0 0 1 8 0a4 4 0 0 1-8 0M4 5l2 1v3l2-2V4z'],
  ['n', 'f', 'M1 2h2v1h7L9 7H4v1h5v1H3L2 3H1zM4 9h1v2H4zM8 9h1v2H8z'], ['g', 'f', 'M5 2h2l1 2-1 1 1 3 1 2H3l1-2 1-3-1-1z'],
  ['t', 'l', 'M2 3h8v6H2zM2 5h8M2 7h8M4 3v6M7 3v6'], ['p', 'l', 'M2 3h8M2 5h8M2 7h8M2 9h8'], ['p', 'f', 'M2 6h2v4H2zM5 2h2v8H5zM8 4h2v6H8z'],
  ['n', 'f', 'M6 2a4 4 0 1 0 4 5H6zM7 2v3h3q0-3-3-3z'], ['b', 'l', 'M1 5l3-2 3 3 4-1M1 9h10'],
  ['s', 'f', 'M2 3l3 3V4l3 2 2-1v5H2z'], ['r', 't', '$'], ['s', 't', '€'], ['b', 't', '¥'], ['s', 't', '?'], ['y', 't', '!'],
  ['g', 'L', 'M2 6l3 3 5-6'], ['r', 'L', 'M3 3l6 6M9 3L3 9'], ['p', 'f', 'M3 2h6l1 3-3 4v2H5V9L2 5zM5 4v2h2V4z'],
  ['s', 'f', 'M2 5q1-3 4-3t4 3v4q-4 2-8 0z'], ['y', 'f', 'M2 3h3l1 1h4v6H2z'],
  ['s', 'f', 'M2 3h8L6 6zM2 4l4 3 4-3v5H2z'], ['r', 'f', 'M3 2l2 2-1 1 3 3 1-1 2 2-1 1C6 11 1 6 2 3z'], ['n', 'f', 'M2 2h5l3 3v5H2zM4 5v1h4V5zM4 7v1h4V7z'],
  ['p', 'L', 'M3 9l6-6'], ['t', 'f', 'M3 5h1q0-3 2-3t2 3h1v5H3zM5 5h2q0-2-1-2T5 5z'], ['p', 'f', 'M2 6h4V3q2-2 4 0v2H9V4H7v2h1v4H2z'],
  ['n', 'f', 'M6 2l5 4H9v4H7V7H5v3H3V6H1z'], ['n', 'l', 'M3 4.500a2 2 0 1 0 4 0a2 2 0 1 0-4 0M7 6l3 4'], ['t', 't', '@'],
  ['t', 'l', 'M2 4l2-2 3 3-2 2zM6 7l2-2 3 3-2 2z'], ['g', 'L', 'M6 2v8M2 6h8'],
  ['r', 'L', 'M2 6h8'], ['g', 'f', 'M4 3l5 3-5 3z'], ['r', 'L', 'M4 2v8M8 2v8'], ['t', 'f', 'M3 3h6v6H3z'],
  ['b', 'f', 'M1 5h4L4 2h1l3 3h3v2H8l-3 3H4l1-3H1z'], ['n', 'f', 'M2 4h7v1h2v3H9l-1 2H3L2 8zM4 2h1v1H4zM7 2h1v1H7z'],
  ['g', 'f', 'M2 4h7v1h1v2H9v1H2zM3 5v2h2V5z'], ['r', 'f', 'M2 2h8v8H2zM3 3v2h2V3zM7 3v2h2V3zM5 5v2h2V5zM3 7v2h2V7zM7 7v2h2V7z'],
  ['y', 'f', 'M7 1L3 7h2l-1 4 5-6H7z'], ['g', 'f', 'M1 6q1-4 5-4t5 4H9v3H8V6H6v3H5V6z'], ['s', 'L', 'M6 3v6M3 6h6M4 4l4 4M8 4L4 8'],
  ['r', 'f', 'M6 1l4 4-1 2H7v3H5V7H3L2 5z'], ['p', 'f', 'M1 4h10q-1 5-3 5H4Q2 9 1 4zM4 2h4v1H4z'],
  ['r', 'f', 'M6 10L2 6V3l2-1 2 1 2-1 2 1v3z'], ['y', 'f', 'M4 3l6-1v6H8V7h1V4L5 5v5H2V8h2z'],
  ['b', 'f', 'M5 1h2v1l2 1 1-1 1 2-1 1v2l1 1-1 2-1-1-2 1v1H5v-1L3 9l-1 1-1-2 1-1V5L1 4l1-2 1 1 2-1zM4 6a2 2 0 1 0 4 0a2 2 0 1 0-4 0z']
];
byId('symbol').innerHTML = tiles.map(([c, kind, d]) => {
  const glyph = kind === 't' ? `<text x="6" y="9">${d}</text>`
    : kind === 'f' ? `<path d="${d}" fill="#fff" fill-rule="evenodd"/>`
    : `<path d="${d}" fill="none" stroke="#fff" stroke-width="${kind === 'L' ? 2 : 1}"/>`;
  return icon(`<rect x=".6" y=".6" width="10.800" height="10.800" fill="${C[c]}"/><g transform="translate(.9 .9) scale(.85)">${glyph}</g>`);
}).join('');
```
